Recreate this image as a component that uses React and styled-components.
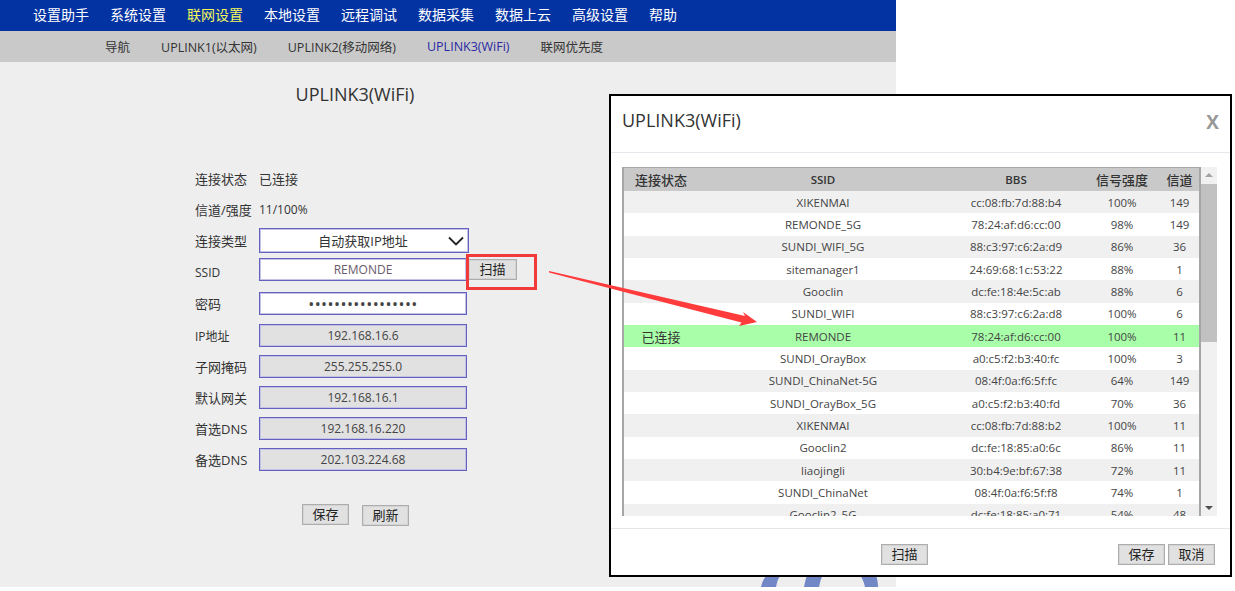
import React from 'react';
import styled, { createGlobalStyle } from 'styled-components';

const GlobalStyle = createGlobalStyle`
  html, body { margin: 0; padding: 0; background: #fff; }
  body {
    font-family: "Open Sans", "Noto Sans CJK SC", sans-serif;
    color: #333;
  }
  * { box-sizing: border-box; }
`;

const topMenu = ['设置助手', '系统设置', '联网设置', '本地设置', '远程调试', '数据采集', '数据上云', '高级设置', '帮助'];
const subMenu = ['导航', 'UPLINK1(以太网)', 'UPLINK2(移动网络)', 'UPLINK3(WiFi)', '联网优先度'];

const readonlyFields = [
  ['IP地址', '192.168.16.6'],
  ['子网掩码', '255.255.255.0'],
  ['默认网关', '192.168.16.1'],
  ['首选DNS', '192.168.16.220'],
  ['备选DNS', '202.103.224.68'],
];

const networks = [
  ['XIKENMAI', 'cc:08:fb:7d:88:b4', '100%', '149'],
  ['REMONDE_5G', '78:24:af:d6:cc:00', '98%', '149'],
  ['SUNDI_WIFI_5G', '88:c3:97:c6:2a:d9', '86%', '36'],
  ['sitemanager1', '24:69:68:1c:53:22', '88%', '1'],
  ['Gooclin', 'dc:fe:18:4e:5c:ab', '88%', '6'],
  ['SUNDI_WIFI', '88:c3:97:c6:2a:d8', '100%', '6'],
  ['REMONDE', '78:24:af:d6:cc:00', '100%', '11'],
  ['SUNDI_OrayBox', 'a0:c5:f2:b3:40:fc', '100%', '3'],
  ['SUNDI_ChinaNet-5G', '08:4f:0a:f6:5f:fc', '64%', '149'],
  ['SUNDI_OrayBox_5G', 'a0:c5:f2:b3:40:fd', '70%', '36'],
  ['XIKENMAI', 'cc:08:fb:7d:88:b2', '100%', '11'],
  ['Gooclin2', 'dc:fe:18:85:a0:6c', '86%', '11'],
  ['liaojingli', '30:b4:9e:bf:67:38', '72%', '11'],
  ['SUNDI_ChinaNet', '08:4f:0a:f6:5f:f8', '74%', '1'],
  ['Gooclin2_5G', 'dc:fe:18:85:a0:71', '54%', '48'],
];

const Screen = styled.div`
  position: relative;
  width: 1235px;
  height: 591px;
  overflow: hidden;
  background: #fff;
`;

const Page = styled.div`
  position: relative;
  width: 896px;
  height: 587px;
  overflow: hidden;
  background: #eee;
`;

const TopNav = styled.nav`
  display: flex;
  gap: 21px;
  height: 31px;
  padding: 0 0 4px 33px;
  align-items: center;
  background: #0333a3;
`;

const TopItem = styled.span`
  font-size: 14px;
  color: ${(p) => (p.$active ? '#f4f75a' : '#fff')};
`;

const SubNav = styled.nav`
  display: flex;
  gap: 31px;
  height: 31px;
  padding: 0 0 1px 105px;
  align-items: center;
  background: #c9c9c9;
`;

const SubItem = styled.span`
  font-size: 12.5px;
  color: ${(p) => (p.$active ? '#2a2aa5' : '#333')};
`;

const PageTitle = styled.h2`
  width: 710px;
  margin: 19px 0 0;
  font-size: 18px;
  font-weight: 400;
  line-height: 26px;
  text-align: center;
`;

const Form = styled.div`
  display: flex;
  flex-direction: column;
  margin-top: 60px;
  padding-left: 195px;
`;

const Row = styled.div`
  display: flex;
  align-items: center;
  height: ${(p) => p.$h || 23}px;
  margin-bottom: ${(p) => p.$mb ?? 8}px;
`;

const Label = styled.label`
  width: 64px;
  flex: none;
  padding-top: ${(p) => (p.$drop ? 6 : 0)}px;
  font-size: ${(p) => (p.$small ? 12 : 13)}px;
  white-space: nowrap;
`;

const Value = styled.span`
  font-size: ${(p) => (p.$small ? 12 : 13)}px;
`;

const Field = styled.div`
  display: flex;
  align-items: center;
  justify-content: center;
  width: 208px;
  height: 23px;
  border: 1px solid #6460bd;
  box-shadow: inset 0 0 0 1px #c3c1e6;
  background: ${(p) => (p.$readonly ? '#e1e1e1' : '#fff')};
  font-size: 12px;
  color: ${(p) => (p.$muted ? '#6b5a6b' : '#444')};
`;

const SelectBox = styled(Field)`
  position: relative;
  width: 210px;
  height: 25px;
  font-size: 13px;
  color: #333;
  padding-right: 2px;

  svg {
    position: absolute;
    right: 4px;
    top: 7px;
  }
`;

const Dots = styled.span`
  font-size: 16px;
  letter-spacing: 0.43px;
  color: #444;
`;

const Btn = styled.button`
  width: 47px;
  height: 21px;
  padding: 0;
  border: 1px solid #adadad;
  box-shadow: inset 0 0 0 1px #d4d4d4;
  background: #e1e1e1;
  font-family: inherit;
  font-size: 13px;
  line-height: 19px;
  color: #222;
`;

const ScanBtn = styled(Btn)`
  margin-left: 1px;
  width: 49px;
`;

const FormActions = styled.div`
  display: flex;
  gap: 13px;
  margin-top: 25px;
  padding-left: 107px;
`;

const RefreshBtn = styled(Btn)`
  margin-top: 1px;
`;

const Watermark = styled.svg`
  position: absolute;
  left: 750px;
  top: 570px;
`;

const Highlight = styled.div`
  position: absolute;
  left: 466px;
  top: 254px;
  width: 71px;
  height: 36px;
  border: 3px solid #f33a3a;
`;

const Arrow = styled.svg`
  position: absolute;
  left: 0;
  top: 0;
  z-index: 3;
  pointer-events: none;
`;

const Modal = styled.section`
  position: absolute;
  left: 609px;
  top: 94px;
  z-index: 2;
  display: flex;
  flex-direction: column;
  width: 623px;
  height: 483px;
  border: 2px solid #000;
  background: #fff;
`;

const ModalHead = styled.header`
  display: flex;
  align-items: center;
  justify-content: space-between;
  height: 57px;
  padding: 0 11px 8px;
  border-bottom: 1px solid #e5e9ee;
`;

const ModalTitle = styled.h3`
  margin: 0;
  font-size: 18px;
  font-weight: 400;
`;

const Close = styled.span`
  font-size: 19px;
  font-weight: 700;
  color: #999;
  margin: 3px 0 0 0;
`;

const ModalBody = styled.div`
  display: flex;
  height: 376px;
  padding: 14px 0 0 11px;
  border-bottom: 1px solid #e5e5e5;
  align-items: flex-start;
`;

const TableFrame = styled.div`
  width: 579px;
  height: 349px;
  overflow: hidden;
  border: solid #a6a6a6;
  border-width: 1px 2px 0 2px;
`;

const cols = '74px 250px 136px 76px 39px';

const HeadRow = styled.div`
  display: grid;
  grid-template-columns: ${cols};
  align-items: center;
  height: 23px;
  background: #c9c9c9;
  font-size: 11.5px;
  font-weight: 600;
  text-align: center;
`;

const HeadCjk = styled.span`
  font-size: 13px;
  font-weight: 500;
`;

const DataRow = styled.div`
  display: grid;
  grid-template-columns: ${cols};
  align-items: center;
  height: 22.35px;
  font-size: 11.5px;
  color: #444;
  text-align: center;
  background: ${(p) => (p.$connected ? '#a9ffa9' : p.$odd ? '#fff' : '#f0f0f0')};
`;

const StatusCell = styled.span`
  font-size: 13px;
  color: #333;
`;

const ScrollTrack = styled.div`
  position: relative;
  width: 16px;
  height: 349px;
  background: #f1f1f1;
`;

const ScrollThumb = styled.div`
  position: absolute;
  left: 0;
  top: 17px;
  width: 16px;
  height: 158px;
  background: #c1c1c1;
`;

const ScrollArrow = styled.div`
  position: absolute;
  left: 4px;
  ${(p) => (p.$down ? 'bottom: 6px;' : 'top: 6px;')}
  width: 0;
  height: 0;
  border-left: 4px solid transparent;
  border-right: 4px solid transparent;
  ${(p) => (p.$down ? 'border-top: 4px solid #505050;' : 'border-bottom: 4px solid #a3a3a3;')}
`;

const ModalFoot = styled.footer`
  display: flex;
  align-items: flex-start;
  padding: 15px 15px 0 270px;
`;

const FootRight = styled.div`
  display: flex;
  gap: 3px;
  margin-left: auto;
`;

export default function App() {
  return (
    <Screen>
      <GlobalStyle />
      <Page>
        <TopNav>
          {topMenu.map((m) => (
            <TopItem key={m} $active={m === '联网设置'}>{m}</TopItem>
          ))}
        </TopNav>
        <SubNav>
          {subMenu.map((m) => (
            <SubItem key={m} $active={m === 'UPLINK3(WiFi)'}>{m}</SubItem>
          ))}
        </SubNav>
        <PageTitle>UPLINK3(WiFi)</PageTitle>
        <Form>
          <Row $h={22} $mb={9}>
            <Label>连接状态</Label>
            <Value>已连接</Value>
          </Row>
          <Row $h={22} $mb={8}>
            <Label>信道/强度</Label>
            <Value $small>11/100%</Value>
          </Row>
          <Row $h={25} $mb={5}>
            <Label>连接类型</Label>
            <SelectBox>
              自动获取IP地址
              <svg width="16" height="10" viewBox="0 0 16 10" fill="none" stroke="#222" strokeWidth="1.8">
                <path d="M1 1.5 L8 8.5 L15 1.5" />
              </svg>
            </SelectBox>
          </Row>
          <Row $mb={11}>
            <Label $small $drop>SSID</Label>
            <Field $muted>REMONDE</Field>
            <ScanBtn>扫描</ScanBtn>
          </Row>
          <Row $mb={9}>
            <Label>密码</Label>
            <Field><Dots>•••••••••••••••••</Dots></Field>
          </Row>
          {readonlyFields.map(([label, value]) => (
            <Row key={label}>
              <Label $small={label === 'IP地址'}>{label}</Label>
              <Field $readonly>{value}</Field>
            </Row>
          ))}
          <FormActions>
            <Btn>保存</Btn>
            <RefreshBtn>刷新</RefreshBtn>
          </FormActions>
        </Form>
        <Highlight />
        <Watermark width="140" height="17" viewBox="0 0 140 17" fill="#7288c6">
          <path d="M11 17 C12 12 14 8 17 5 L31 5 C28 8 27 12 26 17 Z" />
          <path d="M54 17 C55 12 56 8 57 5 L73 5 C71 8 70 12 69 17 Z" />
          <path d="M110 5 L126 5 C127 8 128 12 128 17 L115 17 C114 12 112 8 110 5 Z" />
        </Watermark>
      </Page>

      <Modal>
        <ModalHead>
          <ModalTitle>UPLINK3(WiFi)</ModalTitle>
          <Close>X</Close>
        </ModalHead>
        <ModalBody>
          <TableFrame>
            <HeadRow>
              <HeadCjk>连接状态</HeadCjk>
              <span>SSID</span>
              <span>BBS</span>
              <HeadCjk>信号强度</HeadCjk>
              <HeadCjk>信道</HeadCjk>
            </HeadRow>
            {networks.map(([ssid, bbs, signal, channel], i) => (
              <DataRow key={bbs} $odd={i % 2 === 1} $connected={ssid === 'REMONDE'}>
                <StatusCell>{ssid === 'REMONDE' ? '已连接' : ''}</StatusCell>
                <span>{ssid}</span>
                <span>{bbs}</span>
                <span>{signal}</span>
                <span>{channel}</span>
              </DataRow>
            ))}
          </TableFrame>
          <ScrollTrack>
            <ScrollArrow />
            <ScrollThumb />
            <ScrollArrow $down />
          </ScrollTrack>
        </ModalBody>
        <ModalFoot>
          <Btn>扫描</Btn>
          <FootRight>
            <Btn>保存</Btn>
            <Btn>取消</Btn>
          </FootRight>
        </ModalFoot>
      </Modal>

      <Arrow width="1235" height="591" viewBox="0 0 1235 591">
        <polygon points="549,271 745,316 743,312 757,322 739,326 741.5,322.5 549,272.6" fill="#ff3b3b" />
      </Arrow>
    </Screen>
  );
}
